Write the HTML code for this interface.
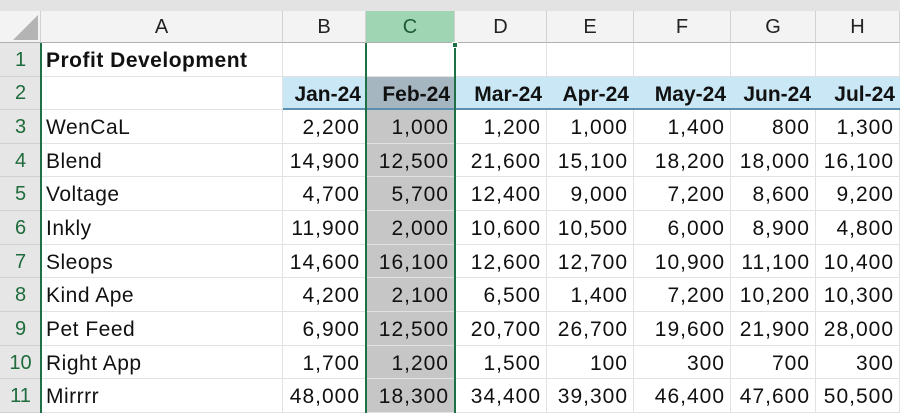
<!DOCTYPE html>
<html><head><meta charset="utf-8"><style>
*{margin:0;padding:0;box-sizing:border-box}
body{width:900px;height:413px;overflow:hidden;background:#fff;font-family:"Liberation Sans",Arial,sans-serif;position:relative}
.a{position:absolute}
.top{left:0;top:0;width:900px;height:11px;background:#e3e3e3}
.ch{top:11px;height:32px;background:#f3f3f3;border-right:1px solid #d2d2d2;border-bottom:1px solid #b0b0b0;font-size:20px;color:#222;text-align:center;line-height:33px}
.rh{left:0;width:41px;background:#e6e6e6;border-bottom:1px solid #d0d0d0;color:#1e6b3c;font-size:20px;text-align:center}
.c{font-size:21px;color:#111;white-space:nowrap;border-right:1px solid #e2e2e2;border-bottom:1px solid #e2e2e2;line-height:36px}
.n{text-align:right;padding-right:5px;letter-spacing:1px}
.n b{letter-spacing:0}
.t{padding-left:5px;letter-spacing:0.5px}
b{font-weight:bold}
.r{position:absolute;left:0;width:900px}
.r>div{position:absolute;top:0;height:100%}
.A{left:41px;width:242px}.B{left:283px;width:83px}.C{left:366px;width:89px;background:#c6c6c6}
.D{left:455px;width:92px}.E{left:547px;width:87px}.F{left:634px;width:97px}.G{left:731px;width:85px}.H{left:816px;width:84px}
</style></head><body>
<div class="a top"></div>
<div class="a" style="left:0;top:11px;width:41px;height:32px;background:#f3f3f3;border-right:1px solid #d2d2d2;border-bottom:1px solid #b0b0b0"></div>
<svg class="a" style="left:12px;top:14px" width="27" height="27"><polygon points="26,1 26,26 1,26" fill="#b4b4b4"/></svg>
<div class="a ch" style="left:41px;width:242px">A</div>
<div class="a ch" style="left:283px;width:83px">B</div>
<div class="a ch" style="left:366px;width:89px;background:#9fd5b2;color:#1e5c36">C</div>
<div class="a ch" style="left:455px;width:92px">D</div>
<div class="a ch" style="left:547px;width:87px">E</div>
<div class="a ch" style="left:634px;width:97px">F</div>
<div class="a ch" style="left:731px;width:85px">G</div>
<div class="a ch" style="left:816px;width:84px">H</div>

<div class="r" style="top:43px;height:34px;line-height:34px"><div class="rh" style="width:41px">1</div><div class="c t A"><b>Profit Development</b></div><div class="c B"></div><div class="c C" style="background:#fff"></div><div class="c D"></div><div class="c E"></div><div class="c F"></div><div class="c G"></div><div class="c H"></div></div>
<div class="r" style="top:77px;height:33px;line-height:33px"><div class="rh" style="width:41px">2</div><div class="c A"></div>
<div class="a" style="left:283px;width:617px;height:33px;background:#c9e7f5;border-bottom:2px solid #5b8fb0"></div>
<div class="c n B" style="border:none"><b>Jan-24</b></div><div class="c n C" style="background:#a6b6c1;border:none;border-bottom:2px solid #5b8fb0"><b>Feb-24</b></div><div class="c n D" style="border:none"><b>Mar-24</b></div><div class="c n E" style="border:none"><b>Apr-24</b></div><div class="c n F" style="border:none"><b>May-24</b></div><div class="c n G" style="border:none"><b>Jun-24</b></div><div class="c n H" style="border:none"><b>Jul-24</b></div></div>

<div class="r" style="top:110px;height:34px;line-height:34px"><div class="rh" style="width:41px">3</div><div class="c t A">WenCaL</div><div class="c n B">2,200</div><div class="c n C">1,000</div><div class="c n D">1,200</div><div class="c n E">1,000</div><div class="c n F">1,400</div><div class="c n G">800</div><div class="c n H">1,300</div></div>
<div class="r" style="top:144px;height:33px;line-height:34px"><div class="rh" style="width:41px">4</div><div class="c t A">Blend</div><div class="c n B">14,900</div><div class="c n C">12,500</div><div class="c n D">21,600</div><div class="c n E">15,100</div><div class="c n F">18,200</div><div class="c n G">18,000</div><div class="c n H">16,100</div></div>
<div class="r" style="top:177px;height:34px;line-height:34px"><div class="rh" style="width:41px">5</div><div class="c t A">Voltage</div><div class="c n B">4,700</div><div class="c n C">5,700</div><div class="c n D">12,400</div><div class="c n E">9,000</div><div class="c n F">7,200</div><div class="c n G">8,600</div><div class="c n H">9,200</div></div>
<div class="r" style="top:211px;height:34px;line-height:34px"><div class="rh" style="width:41px">6</div><div class="c t A">Inkly</div><div class="c n B">11,900</div><div class="c n C">2,000</div><div class="c n D">10,600</div><div class="c n E">10,500</div><div class="c n F">6,000</div><div class="c n G">8,900</div><div class="c n H">4,800</div></div>
<div class="r" style="top:245px;height:33px;line-height:34px"><div class="rh" style="width:41px">7</div><div class="c t A">Sleops</div><div class="c n B">14,600</div><div class="c n C">16,100</div><div class="c n D">12,600</div><div class="c n E">12,700</div><div class="c n F">10,900</div><div class="c n G">11,100</div><div class="c n H">10,400</div></div>
<div class="r" style="top:278px;height:34px;line-height:34px"><div class="rh" style="width:41px">8</div><div class="c t A">Kind Ape</div><div class="c n B">4,200</div><div class="c n C">2,100</div><div class="c n D">6,500</div><div class="c n E">1,400</div><div class="c n F">7,200</div><div class="c n G">10,200</div><div class="c n H">10,300</div></div>
<div class="r" style="top:312px;height:34px;line-height:34px"><div class="rh" style="width:41px">9</div><div class="c t A">Pet Feed</div><div class="c n B">6,900</div><div class="c n C">12,500</div><div class="c n D">20,700</div><div class="c n E">26,700</div><div class="c n F">19,600</div><div class="c n G">21,900</div><div class="c n H">28,000</div></div>
<div class="r" style="top:346px;height:33px;line-height:34px"><div class="rh" style="width:41px">10</div><div class="c t A">Right App</div><div class="c n B">1,700</div><div class="c n C">1,200</div><div class="c n D">1,500</div><div class="c n E">100</div><div class="c n F">300</div><div class="c n G">700</div><div class="c n H">300</div></div>
<div class="r" style="top:379px;height:34px;line-height:34px"><div class="rh" style="width:41px">11</div><div class="c t A">Mirrrr</div><div class="c n B">48,000</div><div class="c n C">18,300</div><div class="c n D">34,400</div><div class="c n E">39,300</div><div class="c n F">46,400</div><div class="c n G">47,600</div><div class="c n H">50,500</div></div>

<div class="a" style="left:40px;top:43px;width:2px;height:370px;background:#1e7145"></div>
<div class="a" style="left:365px;top:43px;width:2px;height:370px;background:#1e7145"></div>
<div class="a" style="left:454px;top:43px;width:2px;height:370px;background:#1e7145"></div>
<div class="a" style="left:452px;top:42px;width:6px;height:6px;background:#1e7145;border:1px solid #fff"></div>
</body></html>
